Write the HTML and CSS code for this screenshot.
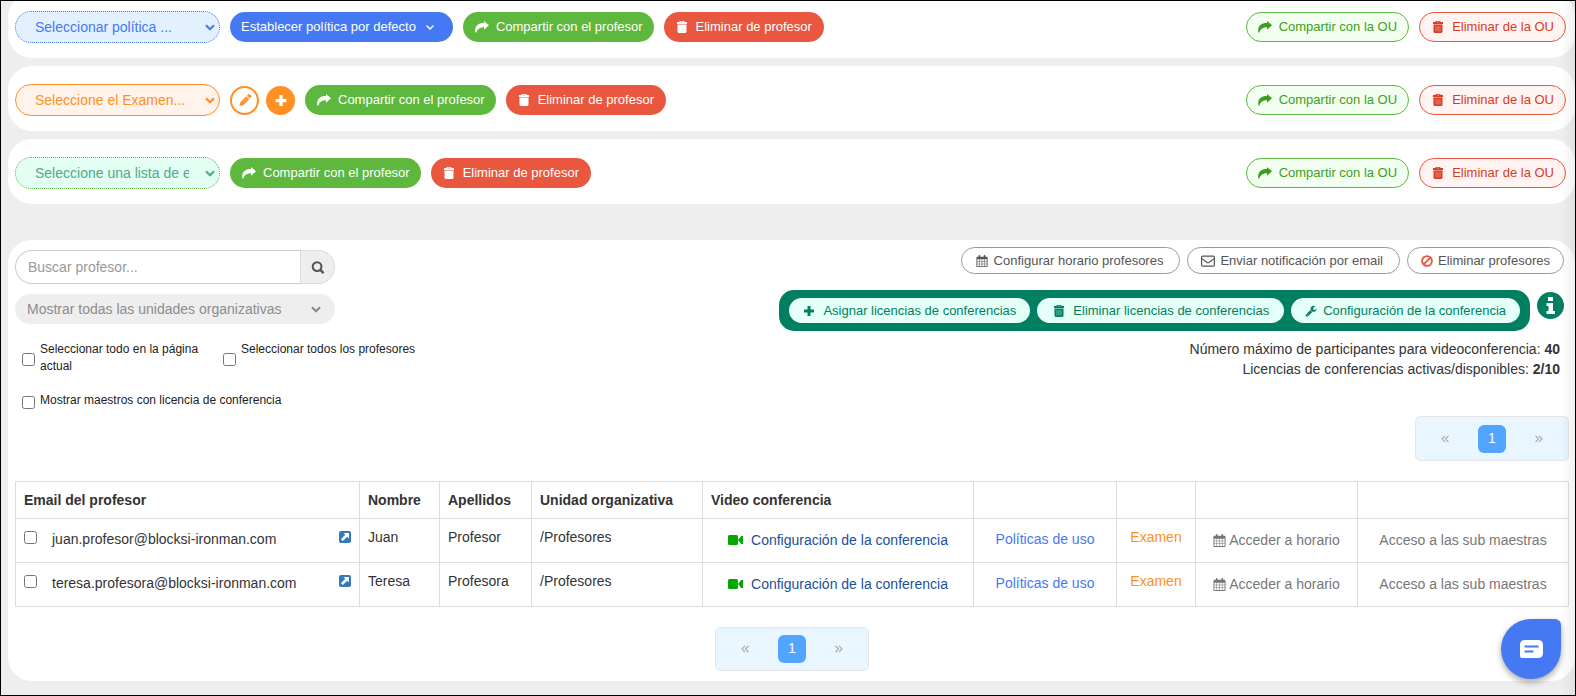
FILE: index.html
```html
<!DOCTYPE html>
<html lang="es">
<head>
<meta charset="utf-8">
<title>Profesores</title>
<link rel="stylesheet" href="styles.css">
</head>
<body>
<svg class="sprite" aria-hidden="true">
  <symbol id="share" viewBox="0 0 14 12"><path d="M9 0 14 4.300 9 8.700V6.200C5 6.200 2.600 7.600 1.300 11.600H.3C-.5 5 2.800 2 9 2z"/></symbol>
  <symbol id="trash" viewBox="0 0 11 12"><path fill-rule="evenodd" d="M3.500 0h4l.8 1H10.500V3H.5V1H2.700zM4.200.8V1.200H6.800V.8zM1 3.500H10V11L9 12H2L1 11z"/><path d="M3.500 5V10.500M5.500 5V10.500M7.500 5V10.500" stroke="#fff" stroke-opacity=".5" stroke-width=".8"/></symbol>
  <symbol id="chevron" viewBox="0 0 10 7"><path d="M1 1.200 5 5.200 9 1.200" fill="none" stroke="currentColor" stroke-width="2.200"/></symbol>
  <symbol id="chevron-thin" viewBox="0 0 10 7"><path d="M1.500 1.500 5 5 8.500 1.500" fill="none" stroke="currentColor" stroke-width="1.400"/></symbol>
  <symbol id="plus" viewBox="0 0 12 12"><path d="M4.500 1h3v3.500H11v3H7.500V11h-3V7.500H1v-3h3.500z"/></symbol>
  <symbol id="pencil" viewBox="0 0 14 14"><path d="M1 13 2 8.800 8.400 2.400 11.600 5.600 5.200 12zM9.200 1.700 10.600.4Q11.300-.2 12 .4L13.600 2Q14.200 2.700 13.600 3.400L12.300 4.800z"/><path d="M4.500 9.500 9.400 4.600" stroke="#fff" stroke-opacity=".5" stroke-width=".6"/></symbol>
  <symbol id="search" viewBox="0 0 14 14"><circle cx="6" cy="6" r="4.700" fill="none" stroke="currentColor" stroke-width="2.200"/><path d="M9.200 9.200 13 13" stroke="currentColor" stroke-width="2.600"/></symbol>
  <symbol id="calendar" viewBox="0 0 13 14"><path fill-rule="evenodd" d="M1 2H2.500V1Q2.500 0 3.500 0T4.500 1V2H8.500V1Q8.500 0 9.500 0T10.500 1V2H12Q13 2 13 3V13Q13 14 12 14H1Q0 14 0 13V3Q0 2 1 2zM1 5V7.300H3.300V5zM3.900 5V7.300H6.200V5zM6.800 5V7.300H9.100V5zM9.700 5V7.300H12V5zM1 7.900V10.100H3.300V7.900zM3.900 7.900V10.100H6.200V7.900zM6.800 7.900V10.100H9.100V7.900zM9.700 7.900V10.100H12V7.900zM1 10.700V13H3.300V10.700zM3.900 10.700V13H6.200V10.700zM6.800 10.700V13H9.100V10.700zM9.700 10.700V13H12V10.700z"/></symbol>
  <symbol id="mail" viewBox="0 0 14 12"><rect x=".6" y="1.100" width="12.800" height="10" rx="1" fill="none" stroke="currentColor" stroke-width="1.200"/><path d="M1 3.600 6 7.500Q7 8.200 8 7.500L13 3.600" fill="none" stroke="currentColor" stroke-width="1.200"/></symbol>
  <symbol id="ban" viewBox="0 0 12 12"><circle cx="6" cy="6" r="4.900" fill="none" stroke="currentColor" stroke-width="1.900"/><path d="M2.600 9.400 9.400 2.600" stroke="currentColor" stroke-width="1.900"/></symbol>
  <symbol id="wrench" viewBox="0 0 1792 1792"><path d="M448 1472q0-26-19-45t-45-19-45 19-19 45 19 45 45 19 45-19 19-45zm644-420l-682 682q-37 37-90 37-52 0-91-37l-106-108q-38-36-38-90 0-53 38-91l681-681q39 98 114.500 173.500t173.500 114.500zm634-435q0 39-23 106-47 134-164.500 217.500t-258.500 83.500q-185 0-316.500-131.500t-131.500-316.500 131.500-316.500 316.500-131.500q58 0 121.500 16.500t107.500 46.500q16 11 16 28t-16 28l-293 169v224l193 107q5-3 79-48.500t135.500-81 70.500-35.500q15 0 23.500 10t8.500 25z"/></symbol>
  <symbol id="info" viewBox="0 0 27 27"><circle cx="13.500" cy="13.500" r="13.500"/><path fill="#fff" d="M11 5h5v4h-5zM9.500 11H16v8h2v3H9.500v-3h2v-5h-2z"/></symbol>
  <symbol id="external" viewBox="0 0 12 12"><rect width="12" height="12" rx="2"/><path fill="#fff" d="M4.500 2H10v5.500L8.200 5.700 3.800 10.100 1.900 8.200 6.300 3.800z"/></symbol>
  <symbol id="video" viewBox="0 0 15 10"><rect width="10" height="10" rx="1.500"/><path d="M10 5 13.200 1H15v8h-1.800z"/></symbol>
  <symbol id="prev" viewBox="0 0 8 8"><path d="M4 .8 1 4 4 7.200M7.500.8 4.500 4 7.500 7.200" fill="none" stroke="currentColor" stroke-width="1.200"/></symbol>
  <symbol id="next" viewBox="0 0 8 8"><path d="M.5.8 3.500 4 .5 7.200M4 .8 7 4 4 7.200" fill="none" stroke="currentColor" stroke-width="1.200"/></symbol>
  <symbol id="chat" viewBox="0 0 23 18"><path d="M5 0H18Q23 0 23 5V13Q23 18 18 18H2Q0 18 0 16V5Q0 0 5 0z"/><path d="M4.500 6.500H18.500M4.500 11.500H13.500" stroke="#4479f3" stroke-width="2"/></symbol>
</svg>

<div class="frame">
  <section class="card toolbar">
    <div class="pick pick-blue">
      <select aria-label="Política"><option>Seleccionar política ...</option></select>
      <svg class="arrow"><use href="#chevron"/></svg>
    </div>
    <button class="btn blue">Establecer política por defecto <svg class="arrow"><use href="#chevron-thin"/></svg></button>
    <button class="btn green"><svg class="icon"><use href="#share"/></svg>Compartir con el profesor</button>
    <button class="btn red"><svg class="icon"><use href="#trash"/></svg>Eliminar de profesor</button>
    <div class="ou">
      <button class="btn green-line"><svg class="icon"><use href="#share"/></svg>Compartir con la OU</button>
      <button class="btn red-line"><svg class="icon"><use href="#trash"/></svg>Eliminar de la OU</button>
    </div>
  </section>

  <section class="card toolbar">
    <div class="pick pick-orange">
      <select aria-label="Examen"><option>Seleccione el Examen...</option></select>
      <svg class="arrow"><use href="#chevron"/></svg>
    </div>
    <div class="rounds">
      <button class="round" aria-label="Editar"><svg class="icon"><use href="#pencil"/></svg></button>
      <button class="round solid" aria-label="Añadir"><svg class="icon"><use href="#plus"/></svg></button>
    </div>
    <button class="btn green"><svg class="icon"><use href="#share"/></svg>Compartir con el profesor</button>
    <button class="btn red"><svg class="icon"><use href="#trash"/></svg>Eliminar de profesor</button>
    <div class="ou">
      <button class="btn green-line"><svg class="icon"><use href="#share"/></svg>Compartir con la OU</button>
      <button class="btn red-line"><svg class="icon"><use href="#trash"/></svg>Eliminar de la OU</button>
    </div>
  </section>

  <section class="card toolbar">
    <div class="pick pick-green">
      <select aria-label="Lista"><option>Seleccione una lista de excepciones</option></select>
      <svg class="arrow"><use href="#chevron"/></svg>
    </div>
    <button class="btn green"><svg class="icon"><use href="#share"/></svg>Compartir con el profesor</button>
    <button class="btn red"><svg class="icon"><use href="#trash"/></svg>Eliminar de profesor</button>
    <div class="ou">
      <button class="btn green-line"><svg class="icon"><use href="#share"/></svg>Compartir con la OU</button>
      <button class="btn red-line"><svg class="icon"><use href="#trash"/></svg>Eliminar de la OU</button>
    </div>
  </section>

  <main class="card main">
    <div class="top">
      <div class="filters">
        <form class="search">
          <input type="text" placeholder="Buscar profesor..." aria-label="Buscar profesor">
          <button type="button" aria-label="Buscar"><svg class="icon"><use href="#search"/></svg></button>
        </form>
        <div class="pick pick-gray">
          <select aria-label="Unidad organizativa"><option>Mostrar todas las unidades organizativas</option></select>
          <svg class="arrow"><use href="#chevron"/></svg>
        </div>
        <div class="checks">
          <input type="checkbox" id="page"><label for="page">Seleccionar todo en la página actual</label>
          <input type="checkbox" id="all"><label for="all">Seleccionar todos los profesores</label>
        </div>
        <div class="checks single">
          <input type="checkbox" id="lic"><label for="lic">Mostrar maestros con licencia de conferencia</label>
        </div>
      </div>

      <div class="side">
        <div class="actions">
          <button class="btn gray-line"><svg class="icon"><use href="#calendar"/></svg>Configurar horario profesores</button>
          <button class="btn gray-line"><svg class="icon"><use href="#mail"/></svg>Enviar notificación por email</button>
          <button class="btn gray-line"><svg class="icon ban"><use href="#ban"/></svg>Eliminar profesores</button>
        </div>
        <div class="licenses">
          <div class="bar">
            <button class="btn mint"><svg class="icon"><use href="#plus"/></svg>Asignar licencias de conferencias</button>
            <button class="btn mint wide"><svg class="icon"><use href="#trash"/></svg>Eliminar licencias de conferencias</button>
            <button class="btn mint tight"><svg class="icon"><use href="#wrench"/></svg>Configuración de la conferencia</button>
          </div>
          <button class="info" aria-label="Información"><svg><use href="#info"/></svg></button>
        </div>
        <p class="limits">Número máximo de participantes para videoconferencia: <b>40</b><br>Licencias de conferencias activas/disponibles: <b>2/10</b></p>
        <nav class="pager" aria-label="Páginas">
          <button aria-label="Anterior"><svg><use href="#prev"/></svg></button>
          <button class="current">1</button>
          <button aria-label="Siguiente"><svg><use href="#next"/></svg></button>
        </nav>
      </div>
    </div>

    <table class="teachers">
      <colgroup><col class="c-email"><col class="c-name"><col class="c-last"><col class="c-unit"><col class="c-video"><col class="c-policy"><col class="c-exam"><col class="c-time"><col class="c-sub"></colgroup>
      <thead>
        <tr><th>Email del profesor</th><th>Nombre</th><th>Apellidos</th><th>Unidad organizativa</th><th>Video conferencia</th><th></th><th></th><th></th><th></th></tr>
      </thead>
      <tbody>
        <tr>
          <td><div class="email"><input type="checkbox" id="t1"><label for="t1">juan.profesor@blocksi-ironman.com</label><a href="#" aria-label="Abrir"><svg><use href="#external"/></svg></a></div></td>
          <td>Juan</td><td>Profesor</td><td>/Profesores</td>
          <td><a href="#" class="link video"><svg><use href="#video"/></svg>Configuración de la conferencia</a></td>
          <td><a href="#" class="link policy">Políticas de uso</a></td>
          <td><a href="#" class="exam">Examen</a></td>
          <td><a href="#" class="link time"><svg><use href="#calendar"/></svg>Acceder a horario</a></td>
          <td><a href="#" class="link">Acceso a las sub maestras</a></td>
        </tr>
        <tr>
          <td><div class="email"><input type="checkbox" id="t2"><label for="t2">teresa.profesora@blocksi-ironman.com</label><a href="#" aria-label="Abrir"><svg><use href="#external"/></svg></a></div></td>
          <td>Teresa</td><td>Profesora</td><td>/Profesores</td>
          <td><a href="#" class="link video"><svg><use href="#video"/></svg>Configuración de la conferencia</a></td>
          <td><a href="#" class="link policy">Políticas de uso</a></td>
          <td><a href="#" class="exam">Examen</a></td>
          <td><a href="#" class="link time"><svg><use href="#calendar"/></svg>Acceder a horario</a></td>
          <td><a href="#" class="link">Acceso a las sub maestras</a></td>
        </tr>
      </tbody>
    </table>

    <nav class="pager bottom" aria-label="Páginas, abajo">
      <button aria-label="Anterior"><svg><use href="#prev"/></svg></button>
      <button class="current">1</button>
      <button aria-label="Siguiente"><svg><use href="#next"/></svg></button>
    </nav>
  </main>
  <div class="edge"></div>
  <button class="chat" aria-label="Chat"><svg><use href="#chat"/></svg></button>
</div>
</body>
</html>
```
FILE: styles.css
```css
* { box-sizing: border-box; }
body {
  margin: 0;
  color: #333;
  font: 14px/20px "Liberation Sans", Arial, sans-serif;
}
button, input, select { font: inherit; color: inherit; margin: 0; }
button { cursor: pointer; border: 0; padding: 0; background: none; }
a { color: inherit; text-decoration: none; }
svg { fill: currentColor; flex: none; display: block; }
.sprite { position: absolute; width: 0; height: 0; }

.frame {
  position: relative;
  display: flex;
  flex-direction: column;
  gap: 8px;
  min-height: 100vh;
  padding: 0 0 14px 7px;
  overflow: hidden;
  background: #eee;
  border: 1px solid #000;
}
.card { background: #fff; border-radius: 24px; }

/* Toolbars */
.toolbar {
  display: flex;
  align-items: center;
  gap: 10px;
  padding: 18px 9px 15px 7px;
}
.toolbar:first-of-type { margin-top: -8px; }
.ou { display: flex; gap: 10px; margin-left: auto; }

.pick { display: grid; align-items: center; width: 205px; }
.pick > * { grid-area: 1 / 1; }
.pick select {
  appearance: none;
  width: 100%;
  height: 32px;
  padding: 0 30px 0 19px;
  border: 1px solid;
  border-radius: 16px;
  background: transparent;
}
.arrow { width: 10px; height: 7px; }
.pick .arrow { justify-self: end; margin-right: 5px; pointer-events: none; }
.pick-blue { color: #4479f3; }
.pick-blue select { background: #e3f1ff; border-style: dotted; }
.pick-orange { color: #ff9026; }
.pick-orange select { background: #fff3eb; }
.pick-green { color: #52a88a; }
.pick-green select { background: #e3fff3; border: 1px dotted #5db83d; }
.pick-gray { width: 320px; color: #8c8c8c; }
.pick-gray select { height: 30px; padding-left: 12px; border: 0; background: #eee; }
.pick-gray .arrow { margin-right: 14px; }

.btn {
  display: flex;
  align-items: center;
  justify-content: center;
  gap: 7px;
  height: 30px;
  padding: 0 10px;
  border: 1px solid transparent;
  border-radius: 15px;
  font-size: 13px;
  white-space: nowrap;
}
.icon { width: 14px; height: 13px; }
.btn .icon { height: 12px; }
.blue { background: #4479f3; color: #fff; padding: 0 17px 0 10px; gap: 9px; }
.green { background: #5db83d; color: #fff; padding-left: 11px; }
.red { background: #e9573f; color: #fff; padding-right: 11px; }
.green-line { background: #f2fff0; color: #3c9e20; border-color: #5db83d; padding: 0 11px; }
.red-line { background: #fff4f2; color: #da3a20; border-color: #e9573f; padding: 0 11px; }
.rounds { display: flex; gap: 7px; }
.round {
  display: grid;
  place-items: center;
  width: 29px;
  height: 29px;
  border: 2px solid #ff9026;
  border-radius: 50%;
  color: #ff9026;
}
.solid { background: #ff9026; color: #fff; }

/* Main panel */
.main { margin-top: 28px; padding: 7px 6px 10px 7px; }
.top { display: flex; justify-content: space-between; }
.filters { display: flex; flex-direction: column; gap: 10px; padding-top: 3px; }
.search { display: flex; width: 320px; }
.search input {
  flex: 1;
  min-width: 0;
  height: 34px;
  padding: 0 12px;
  border: 1px solid #ccc;
  border-right: 0;
  border-radius: 17px 0 0 17px;
  background: #fff;
  outline: 0;
}
.search input::placeholder { color: #999; opacity: 1; }
.search button {
  display: grid;
  place-items: center;
  width: 35px;
  height: 34px;
  border: 1px dotted #ccc;
  border-radius: 0 17px 17px 0;
  background: #eee;
  color: #555;
}
input[type="checkbox"] { width: 13px; height: 13px; }
.checks {
  display: grid;
  grid-template-columns: 13px 178px 13px 190px;
  align-items: center;
  column-gap: 5px;
  padding: 7px 0 0 7px;
  font-size: 12px;
  line-height: 17px;
  color: #222;
}
.checks > label { align-self: start; max-width: 165px; }
.checks > label:last-child { max-width: none; }
.checks > input { margin-top: 3px; }
.single { grid-template-columns: 13px auto; }

.side { display: flex; flex-direction: column; align-items: flex-end; }
.actions { display: flex; gap: 7px; padding-right: 5px; }
.gray-line { height: 27px; gap: 5px; padding: 0 16px 0 13px; color: #555; border-color: #999; }
.gray-line:last-child { padding: 0 13px; }
.btn .ban { width: 12px; color: #e9573f; }
.licenses { display: flex; gap: 7px; padding: 16px 5px 0 0; }
.bar { display: flex; gap: 7px; padding: 8px 10px; border-radius: 15px; background: #008060; }
.mint { height: 25px; padding: 0 13px 0 12px; background: #e5fff9; color: #008060; }
.mint.wide { padding: 0 14px; }
.mint.tight { gap: 5px; }
.info { align-self: flex-start; margin-top: 2px; color: #008060; }
.info svg { width: 27px; height: 27px; }
.limits { margin: 8px 9px 0 0; text-align: right; }

.pager {
  display: flex;
  align-items: center;
  justify-content: space-between;
  width: 154px;
  height: 45px;
  margin-top: 37px;
  padding: 0 15px;
  border: 1px solid #e5e5e5;
  border-radius: 5px;
  background: #e9f6ff;
  color: #aaa;
}
.pager button { display: grid; place-items: center; width: 28px; height: 28px; }
.pager svg { width: 8px; height: 8px; }
.pager .current { border-radius: 6px; background: #51a5ff; color: #fff; line-height: 18px; align-content: start; padding-top: 4px; }
.bottom { height: 44px; margin: 20px auto 0; }

.teachers {
  width: 100%;
  margin-top: 20px;
  table-layout: fixed;
  border-collapse: collapse;
}
.c-email { width: 344px; }
.c-name { width: 80px; }
.c-last { width: 92px; }
.c-unit { width: 171px; }
.c-video { width: 271px; }
.c-policy { width: 143px; }
.c-exam { width: 79px; }
.c-time { width: 162px; }
.c-sub { width: 211px; }
.teachers th, .teachers td {
  height: 44px;
  padding: 8px;
  border: 1px solid #ddd;
  text-align: left;
  vertical-align: top;
  white-space: nowrap;
}
.teachers th { height: 37px; }
.teachers td:nth-child(n+5) { text-align: center; }
.email { display: flex; align-items: flex-start; }
.email input, .email a { margin-top: 4px; }
.email label { margin: 2px auto 0 15px; }
.email a { color: #337ab7; }
.email svg { width: 12px; height: 12px; }
.link { display: flex; align-items: center; justify-content: center; height: 26px; color: #777; }
.video { gap: 8px; color: #1c4f9c; }
.video svg { width: 15px; height: 10px; color: #00a800; }
.policy { height: 24px; color: #4479f3; }
.exam { color: #ff9026; }
.time { gap: 3px; }
.time svg { width: 13px; height: 13px; }

/* Soft shading along the right side of the page */
.edge {
  position: absolute;
  inset: 0 0 0 auto;
  width: 14px;
  pointer-events: none;
  background: linear-gradient(to right, transparent, rgba(0, 0, 0, .06));
}
.chat {
  position: absolute;
  right: 14px;
  bottom: 16px;
  display: grid;
  place-items: center;
  width: 60px;
  height: 60px;
  border-radius: 50% 6px 50% 50%;
  background: #4479f3;
  color: #fff;
  box-shadow: 0 3px 6px rgba(0, 0, 0, .35);
}
.chat svg { width: 23px; height: 18px; }
```
